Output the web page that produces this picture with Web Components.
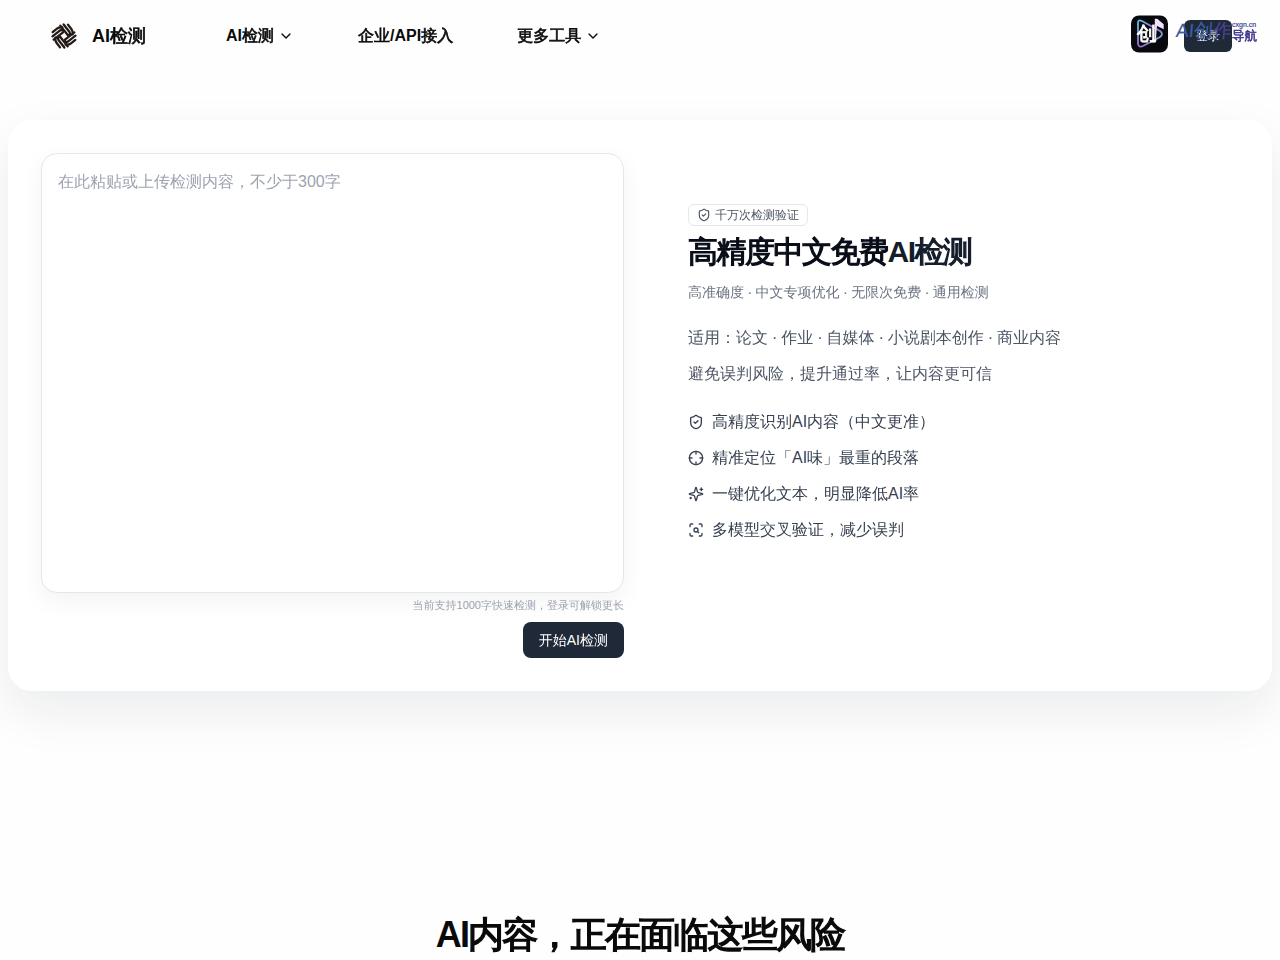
<!DOCTYPE html>
<html lang="zh-CN">
<head>
<meta charset="utf-8">
<title>AI检测</title>
<style>
  html { background: #fefefe; }
  body {
    margin: 0;
    height: 960px;
    overflow: hidden;
    font-family: "Liberation Sans", "WenQuanYi Zen Hei", "Noto Sans CJK SC", sans-serif;
    color: #0a0a0a;
  }
</style>
</head>
<body>
<detect-page></detect-page>

<script>
(function () {
  const ICONS = {
    chevron: '<path d="m6 9 6 6 6-6"/>',
    shield: '<path d="M20 13c0 5-3.5 7.5-7.66 8.95a1 1 0 0 1-.67-.01C7.5 20.5 4 18 4 13V6a1 1 0 0 1 1-1c2 0 4.5-1.2 6.24-2.72a1.17 1.17 0 0 1 1.52 0C14.51 3.81 17 5 19 5a1 1 0 0 1 1 1z"/><path d="m9 12 2 2 4-4"/>',
    crosshair: '<circle cx="12" cy="12" r="10"/><path d="M22 12h-4M6 12H2M12 6V2M12 22v-4"/>',
    sparkles: '<path d="M9.937 15.5A2 2 0 0 0 8.5 14.063l-6.135-1.582a.5.5 0 0 1 0-.962L8.5 9.936A2 2 0 0 0 9.937 8.5l1.582-6.135a.5.5 0 0 1 .963 0L14.063 8.5A2 2 0 0 0 15.5 9.937l6.135 1.581a.5.5 0 0 1 0 .964L15.5 14.063a2 2 0 0 0-1.437 1.437l-1.582 6.135a.5.5 0 0 1-.963 0z"/><path d="M20 3v4M22 5h-4M4 17v2M5 18H3"/>',
    scan: '<path d="M3 7V5a2 2 0 0 1 2-2h2M17 3h2a2 2 0 0 1 2 2v2M21 17v2a2 2 0 0 1-2 2h-2M7 21H5a2 2 0 0 1-2-2v-2"/><circle cx="12" cy="12" r="3"/><path d="m16 16-1.9-1.9"/>',
  };

  function define(name, html) {
    customElements.define(name, class extends HTMLElement {
      constructor() {
        super();
        this.attachShadow({ mode: 'open' }).innerHTML = html;
      }
    });
  }

  class UiIcon extends HTMLElement {
    connectedCallback() {
      const size = this.getAttribute('size') || 16;
      this.attachShadow({ mode: 'open' }).innerHTML = `
        <style>
          :host { display: inline-flex; flex: none; }
          svg { display: block; }
        </style>
        <svg width="${size}" height="${size}" viewBox="0 0 24 24" fill="none" stroke="currentColor"
             stroke-width="2" stroke-linecap="round" stroke-linejoin="round">${ICONS[this.getAttribute('name')]}</svg>
      `;
    }
  }
  customElements.define('ui-icon', UiIcon);

  // The CJK font has no bold face, so its glyphs are thickened with a stroke.
  // Inline element: no whitespace around the slot.
  define('cjk-bold', '<style>:host { display: inline; -webkit-text-stroke: .04em currentColor; }</style><slot></slot>');

  // One arm of three strips, repeated at each quarter turn
  const arm = '<path d="M-6.5-10.1H-1Q2-10.1 4-7.8M-9.3-6.8H0Q1.8-6.8 2.4-5.2M-10.4-3.5H1.5"/>';
  define('brand-logo', `
    <style>
      :host { display: flex; align-items: center; gap: 14px; }
      svg { display: block; }
      span { font-size: 18px; line-height: 28px; font-weight: 700; }
    </style>
    <svg width="28" height="28" viewBox="-14 -14 28 28" fill="none" stroke="#211a17" stroke-width="2.3" stroke-linecap="round">
      ${[-38, 52, 142, 232].map(a => `<g transform="rotate(${a})">${arm}</g>`).join('')}
    </svg>
    <span><slot></slot></span>
  `);

  define('nav-item', `
    <style>
      :host { display: flex; align-items: center; gap: 4px; font-size: 16px; line-height: 24px; font-weight: 700; }
    </style>
    <span><slot></slot></span><slot name="icon"></slot>
  `);

  define('ui-button', `
    <style>
      :host { display: block; }
      button {
        display: block;
        height: var(--h, 36px);
        padding: var(--pt, 1px) var(--px, 16px) 0;
        border: 0;
        border-radius: var(--r, 8px);
        background: #1f2937;
        color: #fff;
        font: inherit;
        font-size: var(--fs, 14px);
        white-space: nowrap;
      }
    </style>
    <button><slot></slot></button>
  `);

  // Directory stamp that floats over the right end of the header
  define('site-stamp', `
    <style>
      :host { position: absolute; left: 1130px; top: 14px; display: flex; color: #3c3f98; }
      .app { position: relative; width: 38px; height: 38px; }
      .app svg { display: block; }
      .app b { position: absolute; left: 7px; top: 10px; font-size: 19px; line-height: 20px; color: #fff; }
      .name {
        margin: 5px 0 0 8px;
        width: 56px;
        font-size: 19px;
        line-height: 24px;
        white-space: nowrap;
        -webkit-text-stroke: .2px currentColor;
        color: #3b5ba8;
      }
      .name i { font-style: normal; color: #4a4299; }
      .name span { display: inline-block; transform: skewX(-5deg); }
      .side { margin-top: 6px; display: flex; flex-direction: column; }
      .side span { font-size: 7px; line-height: 9px; -webkit-text-stroke: .2px currentColor; }
      .side b { font-size: 12.5px; line-height: 14px; color: #3a3089; }
    </style>
    <div class="app">
      <svg width="38" height="40" viewBox="0 0 38 40" fill="none">
        <defs><linearGradient id="g" x1="0" y1="0" x2="1" y2="1">
          <stop offset="0" stop-color="#55c8da"/><stop offset=".5" stop-color="#a06ad0"/><stop offset="1" stop-color="#58c7cf"/>
        </linearGradient></defs>
        <rect x="1" y="1.5" width="37" height="37" rx="8" fill="#07090f"/>
        <path d="M8 9Q8 5 12 7L30 17Q34 20 30 23L13 32Q9 34 8 30Z" stroke="url(#g)" stroke-width="1.8"/>
        <path d="M25.5 27V5.5h1.5l6 5v3.5l-6-3" stroke="#efe2f8" fill="#efe2f8" stroke-width="1.4"/>
        <ellipse cx="24" cy="27" rx="2.3" ry="1.8" fill="#fff"/>
      </svg>
      <b><cjk-bold>创</cjk-bold></b>
    </div>
    <div class="name"><span>AI创<i>作</i></span></div>
    <div class="side"><span>cxgn.cn</span><b><cjk-bold>导航</cjk-bold></b></div>
  `);

  define('site-header', `
    <style>
      :host { display: flex; align-items: center; position: relative; height: 72px; padding: 0 48px 0 50px; }
      nav { display: flex; gap: 64px; margin-left: 80px; flex: 1; }
      ui-button { --h: 32px; --px: 12px; --pt: 0; --r: 6px; --fs: 12px; }
    </style>
    <brand-logo>AI<cjk-bold>检测</cjk-bold></brand-logo>
    <nav>
      <nav-item>AI<cjk-bold>检测</cjk-bold><ui-icon slot="icon" name="chevron"></ui-icon></nav-item>
      <nav-item><cjk-bold>企业</cjk-bold>/API<cjk-bold>接入</cjk-bold></nav-item>
      <nav-item><cjk-bold>更多工具</cjk-bold><ui-icon slot="icon" name="chevron"></ui-icon></nav-item>
    </nav>
    <ui-button>登录</ui-button>
    <site-stamp></site-stamp>
  `);

  define('detect-form', `
    <style>
      :host { display: flex; flex-direction: column; align-items: flex-end; }
      .box {
        box-sizing: border-box;
        width: 100%;
        height: 440px;
        padding: 16px;
        border: 1px solid #e5e7eb;
        border-radius: 16px;
        background: #fff;
        box-shadow: 0 8px 24px rgba(15, 23, 42, .05);
        font-size: 16px;
        line-height: 24px;
        color: #9ca3af;
      }
      .hint { margin: 4px 0 9px; font-size: 11px; line-height: 16px; color: #9ca3af; }
    </style>
    <div class="box">在此粘贴或上传检测内容，不少于300字</div>
    <div class="hint">当前支持1000字快速检测，登录可解锁更长</div>
    <ui-button>开始AI检测</ui-button>
  `);

  define('feature-item', `
    <style>
      :host { display: flex; align-items: center; gap: 8px; font-size: 16px; line-height: 24px; color: #374151; }
    </style>
    <slot name="icon"></slot><span><slot></slot></span>
  `);

  define('hero-copy', `
    <style>
      :host { display: flex; flex-direction: column; align-items: flex-start; padding-top: 51px; }
      .badge {
        display: flex; align-items: center; gap: 4px;
        height: 20px; padding: 0 8px;
        border: 1px solid #e5e7eb; border-radius: 6px;
        font-size: 12px; line-height: 16px; color: #4b5563;
      }
      h1 {
        margin: 8px 0 12px;
        font-size: 30px; line-height: 36px; letter-spacing: -.05em;
        color: #080d18;
      }
      h1 span { color: #151d2b; }
      .sub { font-size: 14px; line-height: 20px; color: #6b7280; }
      .lines, .features { display: flex; flex-direction: column; gap: 12px; margin-top: 24px; }
      .lines { font-size: 16px; line-height: 24px; color: #4b5563; }
      .sub, .lines { word-spacing: -.03em; }
    </style>
    <div class="badge"><ui-icon name="shield" size="14"></ui-icon><span>千万次检测验证</span></div>
    <h1><cjk-bold>高精度中文免费</cjk-bold><span>AI<cjk-bold>检测</cjk-bold></span></h1>
    <div class="sub">高准确度 · 中文专项优化 · 无限次免费 · 通用检测</div>
    <div class="lines">
      <div>适用：论文 · 作业 · 自媒体 · 小说剧本创作 · 商业内容</div>
      <div>避免误判风险，提升通过率，让内容更可信</div>
    </div>
    <div class="features">
      <feature-item><ui-icon slot="icon" name="shield"></ui-icon>高精度识别AI内容（中文更准）</feature-item>
      <feature-item><ui-icon slot="icon" name="crosshair"></ui-icon>精准定位「AI味」最重的段落</feature-item>
      <feature-item><ui-icon slot="icon" name="sparkles"></ui-icon>一键优化文本，明显降低AI率</feature-item>
      <feature-item><ui-icon slot="icon" name="scan"></ui-icon>多模型交叉验证，减少误判</feature-item>
    </div>
  `);

  define('hero-card', `
    <style>
      :host {
        display: grid;
        grid-template-columns: 583px 1fr;
        gap: 64px;
        box-sizing: border-box;
        height: 571px;
        margin: 48px 8px 0;
        padding: 33px;
        border-radius: 24px;
        background: #fff;
        box-shadow: 0 20px 50px rgba(17, 28, 36, .08);
      }
    </style>
    <detect-form></detect-form>
    <hero-copy></hero-copy>
  `);

  define('detect-page', `
    <style>
      :host { display: block; }
      h2 { margin: 224px 0 0; text-align: center; font-size: 36px; line-height: 40px; letter-spacing: -.05em; }
    </style>
    <site-header></site-header>
    <hero-card></hero-card>
    <h2>AI<cjk-bold>内容，正在面临这些风险</cjk-bold></h2>
  `);
})();
</script>
</body>
</html>
